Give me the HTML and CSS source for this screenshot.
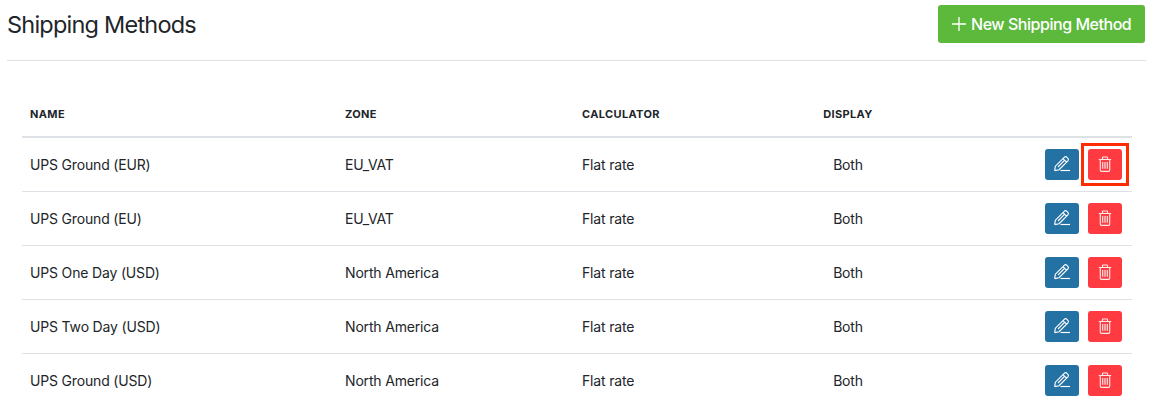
FILE: index.html
```html
<!DOCTYPE html>
<html lang="en">
<head>
<meta charset="utf-8">
<title>Shipping Methods</title>
<link rel="stylesheet" href="styles.css">
</head>
<body>
<svg class="sprite" aria-hidden="true">
  <symbol id="edit" viewBox="0 0 18 18">
    <path d="M1.6 15.6 2.4 11.2 11.2 2.3Q12.6 1 13.9 2.3L14.9 3.3Q16.1 4.5 14.9 5.8L6.1 14.7 1.6 15.6M10 3.7 13.5 7.2M5 12 11.2 5.7"/>
    <path d="M7.5 15.5H17"/>
  </symbol>
  <symbol id="trash" viewBox="0 0 14 16">
    <path d="M.8 3.5H13.2M4.5 3.3V1.5Q4.5 1 5 1H9Q9.5 1 9.5 1.5V3.3M2.3 3.7V14Q2.3 15.3 3.3 15.3H10.7Q11.7 15.3 11.7 14V3.7M4.7 6V12.7M7 6V12.7M9.3 6V12.7"/>
  </symbol>
</svg>
<header class="page-header">
  <h1 class="title">Shipping Methods</h1>
  <a class="btn-new"><svg class="plus" viewBox="0 0 14 14"><path d="M7 0V14M0 7H14"/></svg><span>New Shipping Method</span></a>
</header>
<main class="table">
  <div class="row head"><span>Name</span><span>Zone</span><span>Calculator</span><span class="display">Display</span></div>
  <div class="row"><span>UPS Ground (EUR)</span><span>EU_VAT</span><span>Flat rate</span><span class="display">Both</span><div class="actions"><a class="btn edit"><svg><use href="#edit"/></svg></a><a class="btn delete marked"><svg><use href="#trash"/></svg></a></div></div>
  <div class="row"><span>UPS Ground (EU)</span><span>EU_VAT</span><span>Flat rate</span><span class="display">Both</span><div class="actions"><a class="btn edit"><svg><use href="#edit"/></svg></a><a class="btn delete"><svg><use href="#trash"/></svg></a></div></div>
  <div class="row"><span>UPS One Day (USD)</span><span>North America</span><span>Flat rate</span><span class="display">Both</span><div class="actions"><a class="btn edit"><svg><use href="#edit"/></svg></a><a class="btn delete"><svg><use href="#trash"/></svg></a></div></div>
  <div class="row"><span>UPS Two Day (USD)</span><span>North America</span><span>Flat rate</span><span class="display">Both</span><div class="actions"><a class="btn edit"><svg><use href="#edit"/></svg></a><a class="btn delete"><svg><use href="#trash"/></svg></a></div></div>
  <div class="row"><span>UPS Ground (USD)</span><span>North America</span><span>Flat rate</span><span class="display">Both</span><div class="actions"><a class="btn edit"><svg><use href="#edit"/></svg></a><a class="btn delete"><svg><use href="#trash"/></svg></a></div></div>
</main>
</body>
</html>
```
FILE: styles.css
```css
* { box-sizing: border-box; }
body {
  margin: 0;
  height: 408px;
  overflow: hidden;
  background: #fff;
  color: #212529;
  font: 14px/21px Inter, "Liberation Sans", sans-serif;
  letter-spacing: -0.17px;
}
.sprite { display: none; }
.page-header {
  display: flex;
  justify-content: space-between;
  align-items: flex-start;
  height: 61px;
  margin: 0 5px 0 7px;
  padding: 5px 1px 0 0;
  border-bottom: 1px solid #dee2e6;
}
.title {
  margin: 0;
  font-size: 23.5px;
  font-weight: 400;
  line-height: 39px;
  letter-spacing: -0.78px;
}
.btn-new {
  display: flex;
  align-items: center;
  gap: 5px;
  width: 207px;
  height: 38px;
  padding-left: 14px;
  border-radius: 3px;
  background: #5cb93c;
  color: #fff;
  font-size: 16px;
  font-weight: 500;
  letter-spacing: -0.46px;
  white-space: nowrap;
}
.plus {
  width: 14px;
  height: 14px;
  fill: none;
  stroke: #fff;
  stroke-width: 1.3;
}
.table { margin: 30px 19px 0 22px; }
.row {
  display: grid;
  grid-template-columns: 315px 237px 214px 104px 1fr;
  align-items: center;
  height: 54px;
  padding: 0 10px 0 8px;
  border-bottom: 1px solid #dee2e6;
}
.head {
  height: 47px;
  padding-top: 2px;
  border-bottom-width: 2px;
  font-size: 11px;
  font-weight: 700;
  letter-spacing: 0.35px;
  text-transform: uppercase;
}
.row:last-child { border-bottom: 0; height: 53px; }
.display { text-align: center; }
.actions {
  display: flex;
  justify-content: flex-end;
  gap: 9px;
}
.btn {
  position: relative;
  display: flex;
  align-items: center;
  justify-content: center;
  width: 34px;
  height: 31px;
  padding-bottom: 1px;
  border-radius: 3px;
}
.btn svg { fill: none; stroke: #fff; stroke-width: 1.15; }
.edit { background: #2471a3; }
.edit svg { width: 18px; height: 18px; }
.delete { background: #ff3b41; }
.delete svg { width: 14px; height: 16px; stroke-width: 1.15; stroke: #ffe8e8; }
.marked::after {
  content: "";
  position: absolute;
  inset: -6px -7px;
  border: 3px solid #ff2c00;
}
```
